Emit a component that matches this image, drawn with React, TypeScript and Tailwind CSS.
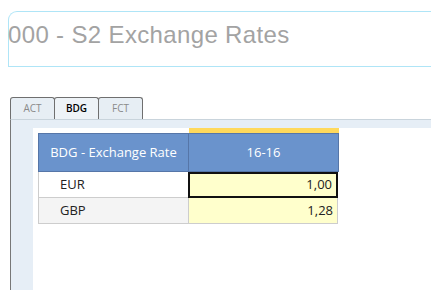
export default function App() {
    const tabs = [
        { label: 'ACT', active: false },
        { label: 'BDG', active: true },
        { label: 'FCT', active: false },
    ];
    const rows = [
        { code: 'EUR', value: '1,00', selected: true, bg: 'bg-white' },
        { code: 'GBP', value: '1,28', selected: false, bg: 'bg-[#f4f4f4]' },
    ];

    return (
        <div className="w-[431px] h-[290px] bg-white overflow-hidden flex flex-col font-['Open_Sans',sans-serif]">
            {/* Title */}
            <div className="mt-[11px] ml-[8px] w-[440px] h-[56px] border border-r-0 border-[#afe5f7] rounded-tl-[9px] shrink-0">
                <div className="pt-[8px] text-[24px] leading-[30px] text-[#a3a3a3] font-['Liberation_Sans',sans-serif] tracking-[0.35px] -ml-[1px] whitespace-nowrap">
                    000 - S2 Exchange Rates
                </div>
            </div>

            {/* Tabs */}
            <div className="mt-[30px] ml-[10px] flex shrink-0">
                {tabs.map((t) => (
                    <div
                        key={t.label}
                        className={`h-[22px] w-[45px] -mr-px border border-b-0 border-[#6f6f6f] rounded-t-[3px] flex items-center justify-center text-[10px] ${
                            t.active ? 'bg-[#eef3f7] text-black font-semibold' : 'bg-[#e7eef4] text-[#8a8a8a]'
                        }`}
                    >
                        {t.label}
                    </div>
                ))}
            </div>

            {/* Panel */}
            <div className="ml-[10px] flex-1 flex flex-col border-l border-t border-[#777] border-t-[#c9d4dc] bg-[#e6eef6] pt-[8px] pl-[22px]">
                <div className="flex-1 bg-white pl-[5px]">
                    <div className="flex">
                        <div className="w-[151px]" />
                        <div className="w-[150px] h-[5px] bg-[#ffd95c]" />
                    </div>
                    <div className="flex w-[301px] h-[39px] bg-[#6a93cc] border border-[#5676a8] text-white text-[13px]">
                        <div className="w-[150px] flex items-center justify-center border-r border-[#5676a8]">
                            BDG - Exchange Rate
                        </div>
                        <div className="flex-1 flex items-center justify-center">16-16</div>
                    </div>
                    {rows.map((r) => (
                        <div key={r.code} className="flex w-[301px] h-[26px] text-[13px] text-[#222]">
                            <div className={`w-[151px] ${r.bg} border-l border-b border-[#cdcdcd] pl-[21px] flex items-center`}>
                                {r.code}
                            </div>
                            <div
                                className={`w-[150px] bg-[#ffffcc] flex items-center justify-end pr-[4px] ${
                                    r.selected ? 'border-2 border-[#111] -ml-px' : 'border-r border-b border-l border-[#cdcdcd] -ml-px'
                                }`}
                            >
                                {r.value}
                            </div>
                        </div>
                    ))}
                </div>
            </div>
        </div>
    );
}
